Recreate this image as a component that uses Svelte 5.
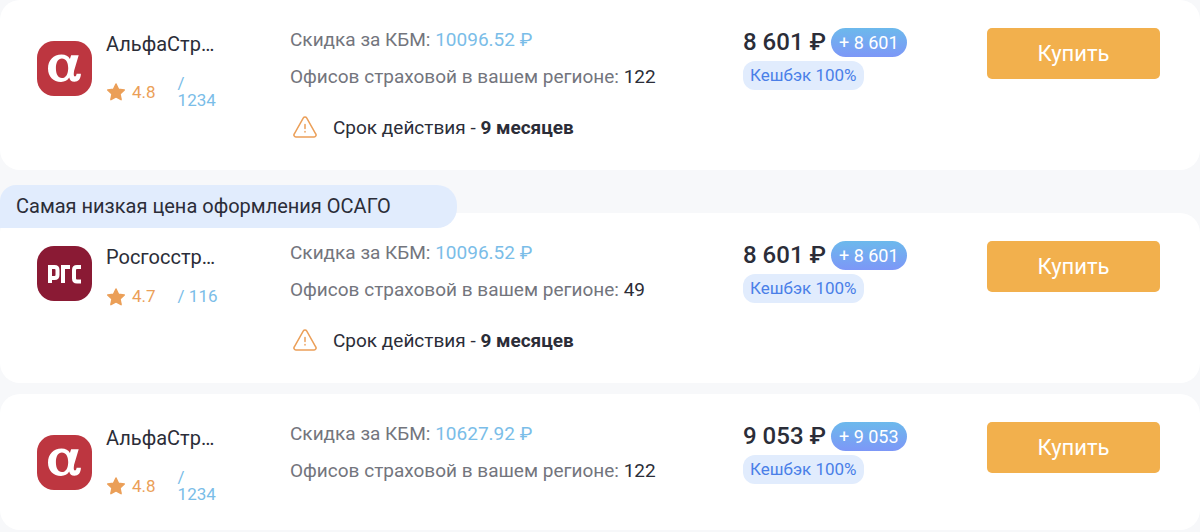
<script lang="ts">
	type Logo = 'alfa' | 'rgs';

	interface Offer {
		id: number;
		logo: Logo;
		name: string;
		rating: string;
		reviews: number;
		discount: string;
		offices: number;
		term?: string;
		price: string;
		label?: string;
	}

	const offers: Offer[] = [
		{
			id: 1,
			logo: 'alfa',
			name: 'АльфаСтр…',
			rating: '4.8',
			reviews: 1234,
			discount: '10096.52',
			offices: 122,
			term: '9 месяцев',
			price: '8 601'
		},
		{
			id: 2,
			logo: 'rgs',
			name: 'Росгосстр…',
			rating: '4.7',
			reviews: 116,
			discount: '10096.52',
			offices: 49,
			term: '9 месяцев',
			price: '8 601',
			label: 'Самая низкая цена оформления ОСАГО'
		},
		{
			id: 3,
			logo: 'alfa',
			name: 'АльфаСтр…',
			rating: '4.8',
			reviews: 1234,
			discount: '10627.92',
			offices: 122,
			price: '9 053'
		}
	];
</script>

<main class="offers">
	{#each offers as offer (offer.id)}
		<article class="offer" class:offer--labeled={offer.label}>
			{#if offer.label}
				<div class="offer-label">{offer.label}</div>
			{/if}

			<div class="card">
				<div class="company">
					{#if offer.logo === 'alfa'}
						<svg class="logo" viewBox="0 0 55 55" aria-hidden="true">
							<rect width="55" height="55" rx="17" fill="#bd3640" />
							<path
								fill="#fff"
								fill-rule="evenodd"
								d="M24.5 13.5c4.2 0 7 1.6 8.4 4.6l1.2-3.900h7.600l-4.600 15.600c-.6 3.600-.5 5.700.8 5.700 1 0 1.400-1 1.700-2.700h4.300c0 5-2.600 8-6.500 8-3 0-4.600-1.600-5.200-4.300-1.700 2.900-4.400 4.400-8.200 4.400-7.800 0-13-5.300-13-13.400 0-8.300 5.400-14 13.500-14zm.4 3.900c-3.700 0-6 3.700-6 9.700 0 6.200 2.200 10 6 10s6.300-4 6.300-10.200c0-5.900-2.400-9.500-6.300-9.500z"
							/>
						</svg>
					{:else}
						<svg class="logo" viewBox="0 0 55 55" aria-hidden="true">
							<rect width="55" height="55" rx="17" fill="#8a1a34" />
							<g fill="none" stroke="#fff" stroke-width="4">
								<path d="M13 37V21h4.500q3 0 3 3v5q0 3-3 3H13" />
								<path d="M26 37V21h7" />
								<path d="M44 21h-4q-3 0-3 3v8.500q0 3 3 3h4" />
							</g>
						</svg>
					{/if}

					<div class="company-info">
						<div class="company-name">{offer.name}</div>
						<div class="rating">
							<svg class="star" viewBox="0 0 20 20" aria-hidden="true">
								<path
									d="M10 2l2.500 5.300 5.800.7-4.300 4 1.100 5.700L10 14.900l-5.100 2.800L6 12 1.700 8l5.800-.7z"
									fill="#eb9f58"
									stroke="#eb9f58"
									stroke-width="1.500"
									stroke-linejoin="round"
								/>
							</svg>
							<span class="score">{offer.rating}</span>
							<a class="reviews" href="#reviews-{offer.id}">/ {offer.reviews}</a>
						</div>
					</div>
				</div>

				<div class="details">
					<div class="detail">Скидка за КБМ: <span class="discount">{offer.discount} ₽</span></div>
					<div class="detail">
						Офисов страховой в вашем регионе: <span class="offices">{offer.offices}</span>
					</div>
					{#if offer.term}
						<div class="term">
							<svg class="warning" viewBox="0 0 24 22" aria-hidden="true">
								<g fill="none" stroke="#eb9f58" stroke-width="1.500" stroke-linecap="round">
									<path
										d="M10.200 2.100a2.100 2.100 0 0 1 3.600 0l9 15.900a1.900 1.900 0 0 1-1.700 2.900H2.900A1.900 1.900 0 0 1 1.200 18z"
									/>
									<path d="M12 8.500v4M12 15.500v.5" />
								</g>
							</svg>
							<span>Срок действия - <b>{offer.term}</b></span>
						</div>
					{/if}
				</div>

				<div class="price">
					<div class="price-row">
						<span class="amount">{offer.price} ₽</span>
						<span class="bonus">+ {offer.price}</span>
					</div>
					<span class="cashback">Кешбэк 100%</span>
				</div>

				<button type="button" class="btn-buy">Купить</button>
			</div>
		</article>
	{/each}
</main>

<style>
	:global(body) {
		background: #f7f8fa;
	}
	.offers {
		display: flex;
		flex-direction: column;
		gap: 11px;
		font-family: Roboto, 'Noto Sans', sans-serif;
		font-size: 19px;
		color: #2b2d38;
	}
	.offer--labeled {
		position: relative;
		padding-top: 32px;
	}
	/* sticks out over the top edge of the card */
	.offer-label {
		position: absolute;
		top: 4px;
		left: 0;
		box-sizing: border-box;
		padding: 0 66px 0 16px;
		font-size: 20px;
		line-height: 43px;
		white-space: nowrap;
		background: #e1ecfd;
		border-radius: 16px 20px 20px 0;
	}
	.card {
		display: grid;
		grid-template-columns: 253fr 453fr 244fr 173fr;
		align-items: start;
		padding: 28px 40px 27px 37px;
		background: #fff;
		border-radius: 20px;
	}
	.company {
		display: flex;
		align-items: center;
		gap: 14px;
	}
	.logo {
		flex: none;
		width: 55px;
		height: 55px;
	}
	.company-info {
		width: 112px;
	}
	.company-name {
		margin-bottom: 15px;
		font-size: 20px;
		line-height: 32px;
		white-space: nowrap;
	}
	.rating {
		display: flex;
		align-items: center;
		font-size: 17px;
		line-height: 17px;
	}
	.star {
		flex: none;
		width: 20px;
		height: 20px;
		margin: -2px 6px -2px 0;
	}
	.score {
		margin-right: 22px;
		color: #eb9f58;
	}
	.reviews {
		color: #7abde8;
		text-decoration: none;
	}
	.details {
		line-height: 24px;
	}
	.detail {
		margin-bottom: 13px;
		color: #73757d;
	}
	.discount {
		color: #7abde8;
	}
	.offices {
		color: #2b2d38;
	}
	.term {
		display: flex;
		align-items: flex-start;
		gap: 16px;
		margin-top: 27px;
		padding: 0 0 3px 3px;
	}
	.warning {
		width: 24px;
		height: 22px;
	}
	.price-row {
		display: flex;
		align-items: center;
		gap: 5px;
		margin-bottom: 4px;
	}
	.amount {
		font-size: 24px;
		font-weight: 500;
		line-height: 29px;
	}
	.bonus,
	.cashback {
		display: inline-block;
		padding: 0 7px;
		line-height: 29px;
		border-radius: 15px;
	}
	.bonus {
		padding: 0 8px;
		font-size: 18px;
		color: #fff;
		background: linear-gradient(#6cb9ec, #7d97f7);
	}
	.cashback {
		font-size: 17px;
		color: #4a7fe8;
		background: #e1ecfd;
		border-radius: 12px;
	}
	.btn-buy {
		padding: 0;
		border: none;
		border-radius: 5px;
		background: #f2b04d;
		color: #fff;
		font-family: inherit;
		font-size: 22px;
		line-height: 51px;
		cursor: pointer;
	}
</style>
